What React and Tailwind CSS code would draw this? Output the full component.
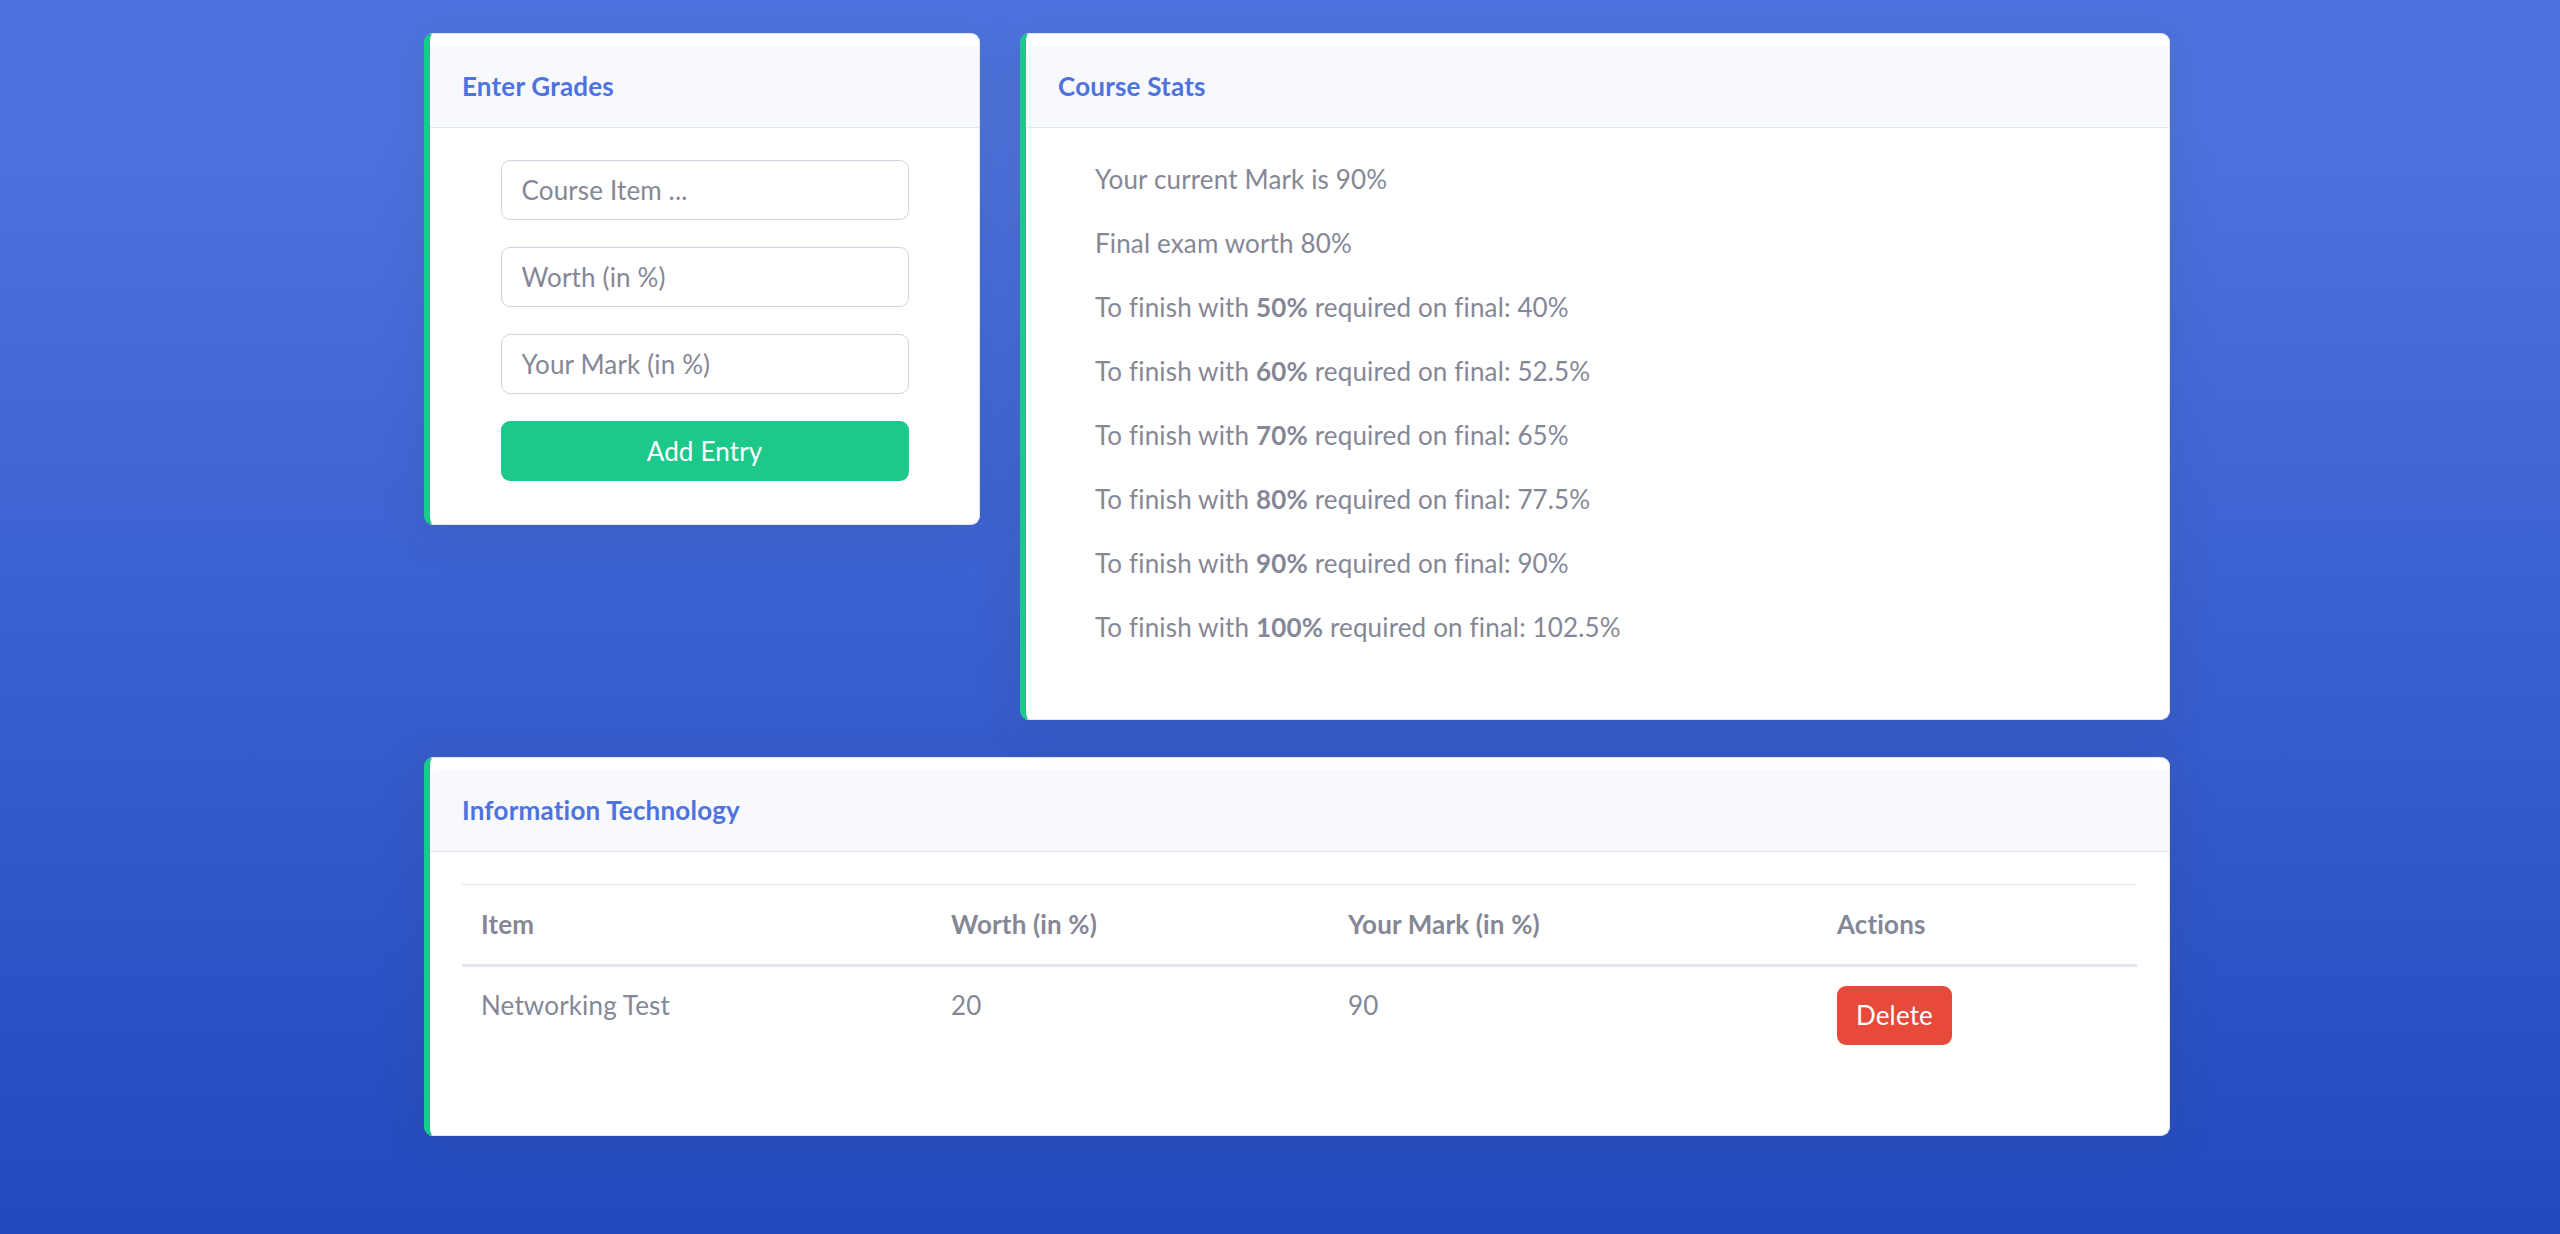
import { useState } from "react";

const targets = [
  { finish: 50, need: "40%" },
  { finish: 60, need: "52.5%" },
  { finish: 70, need: "65%" },
  { finish: 80, need: "77.5%" },
  { finish: 90, need: "90%" },
  { finish: 100, need: "102.5%" },
];

function Card({ title, className, children }) {
  return (
    <div className={"bg-white rounded-[9px] border border-[#e3e6f0] border-l-[6px] border-l-[#1cc88a] pt-[12px] shadow-[0_4px_46px_0_rgba(58,59,69,0.15)] " + (className || "")}>
      <div className="h-[82px] flex items-center px-[32px] bg-[#f8f9fc] border-b-[1.5px] border-[#e3e6f0] rounded-tl-[9px]">
        <h6 className="text-[26px] font-bold text-[#4e73df] leading-[39px] tracking-[0.2px]">{title}</h6>
      </div>
      {children}
    </div>
  );
}

export default function App() {
  const [entries, setEntries] = useState([{ id: 1, item: "Networking Test", worth: 20, mark: 90 }]);

  return (
    <div className="min-h-screen bg-[linear-gradient(180deg,#4e73df_10%,#224abe_100%)] pt-[33px] pb-[40px] font-['Lato',sans-serif] text-[#858796] tracking-[0.15px]">
      <div className="ml-[424px] w-[1746px]">
        <div className="flex items-start gap-[40px]">
          <Card title="Enter Grades" className="w-[556px]">
            <div className="pt-[32px] pb-[43px] flex flex-col items-center gap-[27px]">
              {["Course Item ...", "Worth (in %)", "Your Mark (in %)"].map((p) => (
                <input key={p} placeholder={p}
                  className="w-[408px] h-[60px] px-[20px] rounded-[9px] border-[1.5px] border-[#d1d3e2] text-[26px] placeholder:text-[#858796] focus:outline-none" />
              ))}
              <button className="w-[408px] h-[60px] rounded-[9px] bg-[#1cc88a] text-white text-[26px]">Add Entry</button>
            </div>
          </Card>

          <Card title="Course Stats" className="w-[1150px]">
            <div className="pt-[32px] pb-[72px] pl-[69px] flex flex-col gap-[25px] text-[26px] leading-[39px]">
              <p>Your current Mark is 90%</p>
              <p>Final exam worth 80%</p>
              {targets.map((t) => (
                <p key={t.finish}>To finish with <b className="font-bold">{t.finish}%</b> required on final: {t.need}</p>
              ))}
            </div>
          </Card>
        </div>

        <Card title="Information Technology" className="mt-[37px]">
          <div className="pt-[32px] pb-[71px] px-[32px] text-[26px] leading-[39px]">
            <div className="border-t-[1.5px] border-[#e3e6f0]">
              <div className="grid grid-cols-[470px_397px_489px_1fr] border-b-[3px] border-[#e3e6f0] font-bold">
                <div className="px-[19px] py-[20px]">Item</div>
                <div className="px-[19px] py-[20px]">Worth (in %)</div>
                <div className="px-[19px] py-[20px]">Your Mark (in %)</div>
                <div className="px-[19px] py-[20px]">Actions</div>
              </div>
              {entries.map((e) => (
                <div key={e.id} className="grid grid-cols-[470px_397px_489px_1fr]">
                  <div className="px-[19px] py-[19px]">{e.item}</div>
                  <div className="px-[19px] py-[19px]">{e.worth}</div>
                  <div className="px-[19px] py-[19px]">{e.mark}</div>
                  <div className="px-[19px] py-[19px]">
                    <button onClick={() => setEntries(entries.filter((x) => x.id !== e.id))}
                      className="bg-[#e74a3b] text-white rounded-[9px] px-[19px] py-[10px] leading-[39px]">Delete</button>
                  </div>
                </div>
              ))}
            </div>
          </div>
        </Card>
      </div>
    </div>
  );
}
